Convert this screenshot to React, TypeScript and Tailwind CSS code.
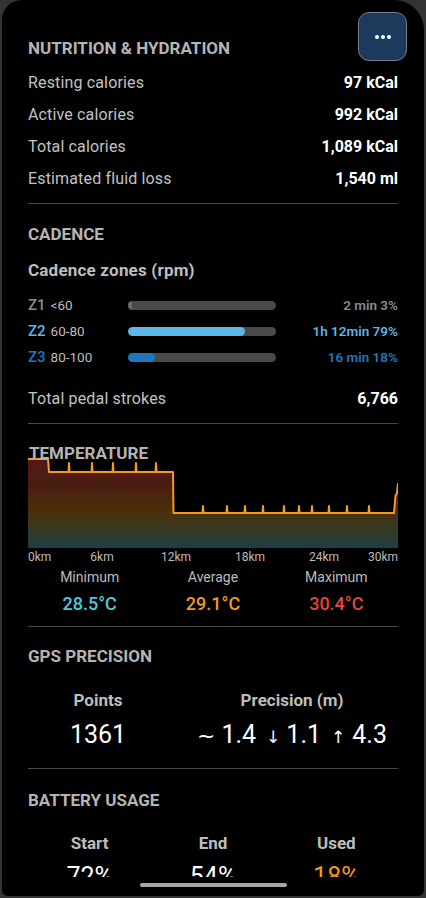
import React from "react";

const font = { fontFamily: "Roboto, 'Noto Sans', sans-serif" };

const nutrition = [
  { label: "Resting calories", value: "97 kCal" },
  { label: "Active calories", value: "992 kCal" },
  { label: "Total calories", value: "1,089 kCal" },
  { label: "Estimated fluid loss", value: "1,540 ml" },
];

const zones = [
  { id: "Z1", range: "<60", pct: 3, text: "2 min 3%", tone: "text-[#8c8c8c]", fill: "bg-[#6a6a6a]" },
  { id: "Z2", range: "60-80", pct: 79, text: "1h 12min 79%", tone: "text-[#5cb6ea]", fill: "bg-[#5cb6ea]" },
  { id: "Z3", range: "80-100", pct: 18, text: "16 min 18%", tone: "text-[#1f78bd]", fill: "bg-[#1f78bd]" },
];

// chart geometry in a 370 x 96 box
const spikesHigh = [41, 64, 85, 108, 128];
const spikesLow = [175, 199, 217, 235, 256, 271, 284, 301, 319, 341];

function buildLine() {
  const pts: string[] = ["0,7", "20,7", "21,20"];
  for (const x of spikesHigh) {
    pts.push(`${x - 0.5},20`, `${x},11`, `${x + 0.5},20`);
  }
  pts.push("145,20", "145.5,61");
  for (const x of spikesLow) {
    pts.push(`${x - 0.5},61`, `${x},54`, `${x + 0.5},61`);
  }
  pts.push("366,61", "367.5,44", "369,41", "370,31");
  return pts;
}

function TempChart() {
  const pts = buildLine();
  const area = `M${pts.join(" L")} L370,96 L0,96 Z`;
  return (
    <svg width="370" height="96" viewBox="0 0 370 96" className="block">
      <defs>
        <linearGradient id="tempFill" x1="0" y1="0" x2="0" y2="96" gradientUnits="userSpaceOnUse">
          <stop offset="0" stopColor="#571616" />
          <stop offset="0.35" stopColor="#4a1e12" />
          <stop offset="0.62" stopColor="#4a300a" />
          <stop offset="0.8" stopColor="#373a22" />
          <stop offset="1" stopColor="#1b4047" />
        </linearGradient>
      </defs>
      <path d={area} fill="url(#tempFill)" />
      <polyline points={pts.join(" ")} fill="none" stroke="#f59a1c" strokeWidth="2" strokeLinejoin="round" />
    </svg>
  );
}

function SectionTitle({ children }: { children: React.ReactNode }) {
  return (
    <h2 className="text-[17px] leading-[20px] font-bold text-[#b4b4b4] uppercase">
      {children}
    </h2>
  );
}

function Divider({ className = "" }: { className?: string }) {
  return <div className={`h-px bg-[#474747] ${className}`} />;
}

const arrowFont = { fontFamily: "'DejaVu Sans', sans-serif" };

export default function App() {
  return (
    <div className="w-[426px] h-[898px] bg-[#333333] pl-[2px] pr-[2px] pb-[2px]" style={font}>
      <div className="relative h-[896px] bg-black rounded-tl-[20px] rounded-tr-[30px] rounded-b-[6px] overflow-hidden">
        {/* Menu button */}
        <button className="absolute right-[17px] top-[12px] w-[49px] h-[49px] rounded-[11px] bg-[#1d3a5d] border border-[#6f7d8c] flex items-center justify-center gap-[2px]">
          <span className="w-[4px] h-[4px] rounded-full bg-white" />
          <span className="w-[4px] h-[4px] rounded-full bg-white" />
          <span className="w-[4px] h-[4px] rounded-full bg-white" />
        </button>

        <div className="h-[877px] overflow-hidden px-[26px] pt-[38px]">
          {/* Nutrition */}
          <SectionTitle>Nutrition &amp; Hydration</SectionTitle>
          <div className="mt-[9px]">
            {nutrition.map((r) => (
              <div key={r.label} className="h-[32px] flex items-center justify-between text-[16px]">
                <span className="text-[#c2c2c2] tracking-[0.15px]">{r.label}</span>
                <span className="font-bold text-white">{r.value}</span>
              </div>
            ))}
          </div>
          <Divider className="mt-[8px]" />

          {/* Cadence */}
          <div className="mt-[20px]">
            <SectionTitle>Cadence</SectionTitle>
          </div>
          <div className="mt-[16px] text-[17px] leading-[20px] font-bold tracking-[0.2px] text-[#bdbdbd]">Cadence zones (rpm)</div>
          <div className="mt-[12px]">
            {zones.map((z) => (
              <div key={z.id} className="h-[26px] flex items-center">
                <div className="w-[100px] flex items-baseline gap-[5px]">
                  <span className={`text-[15px] font-medium ${z.tone}`}>{z.id}</span>
                  <span className="text-[13.5px] text-[#bdbdbd]">{z.range}</span>
                </div>
                <div className="w-[148px] h-[9px] rounded-full bg-[#4a4a4a] overflow-hidden">
                  <div className={`h-full rounded-full ${z.fill}`} style={{ width: `${z.pct}%` }} />
                </div>
                <span className={`flex-1 text-right text-[13.5px] font-semibold ${z.tone}`}>{z.text}</span>
              </div>
            ))}
          </div>
          <div className="mt-[13px] h-[32px] flex items-center justify-between text-[16px]">
            <span className="text-[#c2c2c2] tracking-[0.15px]">Total pedal strokes</span>
            <span className="font-bold text-white">6,766</span>
          </div>
          <Divider className="mt-[8px]" />

          {/* Temperature */}
          <div className="relative mt-[28px]">
            <TempChart />
            <div className="absolute left-[1px] top-[-9px]">
              <SectionTitle>Temperature</SectionTitle>
            </div>
          </div>
          <div className="mt-[1px] grid grid-cols-[37px_74px_74px_74px_74px_37px] text-[12px] leading-[16px] text-[#bcbcbc]">
            <span className="text-left">0km</span>
            <span className="text-center">6km</span>
            <span className="text-center">12km</span>
            <span className="text-center">18km</span>
            <span className="text-center">24km</span>
            <span className="text-right">30km</span>
          </div>
          <div className="mt-[2px] grid grid-cols-3 text-center">
            <span className="text-[14px] leading-[20px] text-[#bcbcbc]">Minimum</span>
            <span className="text-[14px] leading-[20px] text-[#bcbcbc]">Average</span>
            <span className="text-[14px] leading-[20px] text-[#bcbcbc]">Maximum</span>
            <span className="mt-[5px] text-[18px] leading-[24px] font-medium text-[#4ecadf]">28.5°C</span>
            <span className="mt-[5px] text-[18px] leading-[24px] font-medium text-[#f29a1f]">29.1°C</span>
            <span className="mt-[5px] text-[18px] leading-[24px] font-medium text-[#e8443a]">30.4°C</span>
          </div>
          <Divider className="mt-[10px]" />

          {/* GPS */}
          <div className="mt-[19px]">
            <SectionTitle>GPS Precision</SectionTitle>
          </div>
          <div className="mt-[24px] flex">
            <div className="w-[140px] flex flex-col items-center">
              <span className="text-[17px] leading-[20px] font-bold text-[#bdbdbd]">Points</span>
              <span className="mt-[10px] text-[25px] leading-[30px] text-white">1361</span>
            </div>
            <div className="flex-1 ml-[18px] flex flex-col items-center">
              <span className="text-[17px] leading-[20px] font-bold text-[#bdbdbd]">Precision (m)</span>
              <div className="mt-[10px] flex items-baseline text-white leading-[30px]">
                <span className="text-[22px] mr-[6px]" style={arrowFont}>~</span>
                <span className="text-[25px]">1.4</span>
                <span className="text-[17px] ml-[10px] mr-[6px]" style={arrowFont}>↓</span>
                <span className="text-[25px]">1.1</span>
                <span className="text-[17px] ml-[10px] mr-[7px]" style={arrowFont}>↑</span>
                <span className="text-[25px]">4.3</span>
              </div>
            </div>
          </div>
          <Divider className="mt-[16px]" />

          {/* Battery */}
          <div className="mt-[21px]">
            <SectionTitle>Battery usage</SectionTitle>
          </div>
          <div className="mt-[23px] grid grid-cols-3 text-center">
            <span className="text-[17px] leading-[20px] font-bold text-[#bdbdbd]">Start</span>
            <span className="text-[17px] leading-[20px] font-bold text-[#bdbdbd]">End</span>
            <span className="text-[17px] leading-[20px] font-bold text-[#bdbdbd]">Used</span>
            <span className="mt-[9px] text-[25px] leading-[30px] text-white">72%</span>
            <span className="mt-[9px] text-[25px] leading-[30px] text-white">54%</span>
            <span className="mt-[9px] text-[25px] leading-[30px] text-[#f29a1f]">18%</span>
          </div>
        </div>

        {/* Home indicator */}
        <div className="h-[19px] flex justify-center pt-[6px]">
          <div className="w-[147px] h-[4px] rounded-full bg-[#a6a6a6]" />
        </div>
      </div>
    </div>
  );
}
